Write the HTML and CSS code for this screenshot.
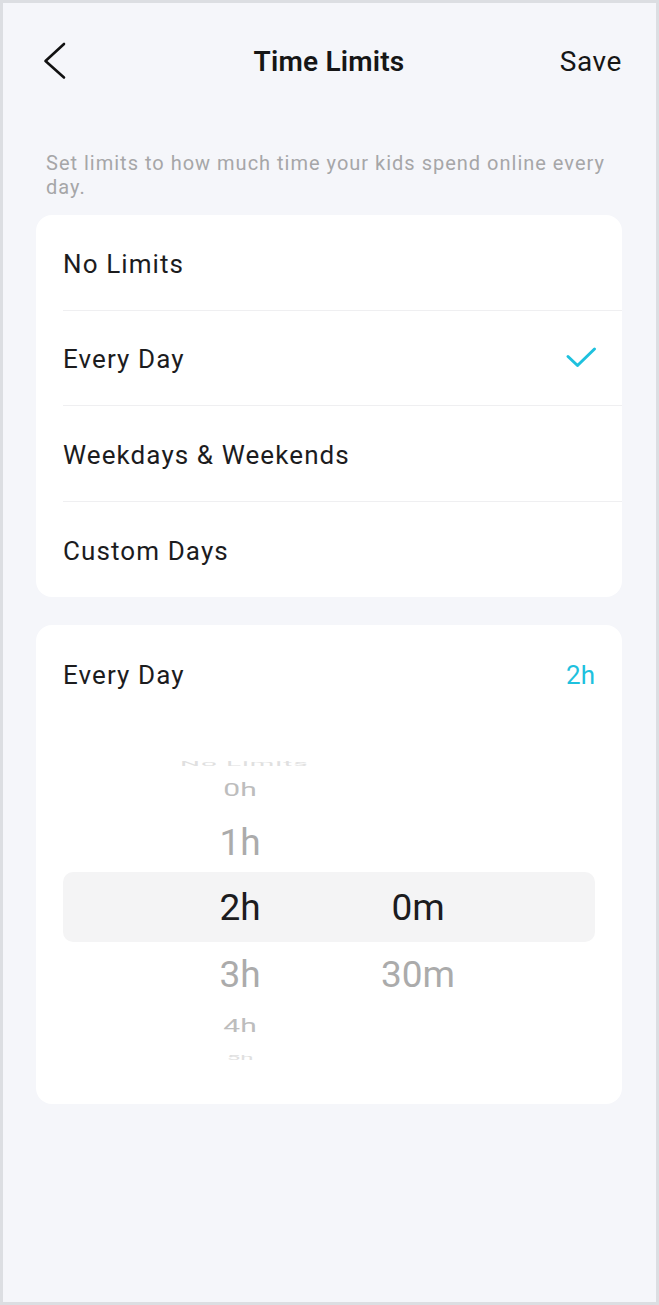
FILE: index.html
```html
<!DOCTYPE html>
<html lang="en">
<head>
<meta charset="utf-8">
<title>Time Limits</title>
<link rel="stylesheet" href="styles.css">
</head>
<body>
<div class="screen">
  <header class="topbar">
    <div class="back">
      <svg width="28" height="40" viewBox="0 0 28 40"><path d="M24 3 L5.5 20 L24 36.5" fill="none" stroke="#111" stroke-width="2.6" stroke-linecap="round" stroke-linejoin="round"/></svg>
    </div>
    <h1 class="title">Time Limits</h1>
    <div class="save">Save</div>
  </header>

  <p class="intro">Set limits to how much time your kids spend online every day.</p>

  <section class="card options">
    <div class="opt"><div class="opt-inner"><span>No Limits</span></div></div>
    <div class="opt"><div class="opt-inner"><span>Every Day</span>
      <svg class="check" width="32" height="24" viewBox="0 0 32 24"><path d="M3 10.5 L12.5 19.5 L29.5 3" fill="none" stroke="#1ec1de" stroke-width="3" stroke-linecap="round" stroke-linejoin="round"/></svg>
    </div></div>
    <div class="opt"><div class="opt-inner"><span>Weekdays &amp; Weekends</span></div></div>
    <div class="opt last"><div class="opt-inner"><span>Custom Days</span></div></div>
  </section>

  <section class="card schedule">
    <div class="sched-head"><span>Every Day</span><span class="sched-val">2h</span></div>
    <div class="picker">
      <div class="prow r0"><span class="cell">No Limits</span><span class="cell"></span></div>
      <div class="prow r1"><span class="cell">0h</span><span class="cell"></span></div>
      <div class="prow r2"><span class="cell">1h</span><span class="cell"></span></div>
      <div class="prow r3 sel"><span class="cell">2h</span><span class="cell">0m</span></div>
      <div class="prow r4"><span class="cell">3h</span><span class="cell">30m</span></div>
      <div class="prow r5"><span class="cell">4h</span><span class="cell"></span></div>
      <div class="prow r6"><span class="cell">5h</span><span class="cell"></span></div>
    </div>
  </section>
</div>
</body>
</html>
```

FILE: styles.css
```css
* { box-sizing: border-box; }
html, body { margin: 0; padding: 0; }
body {
  font-family: Roboto, "Liberation Sans", Arial, sans-serif;
  background: #f5f6fa;
  color: #1c1c1e;
}
.screen {
  width: 659px;
  height: 1305px;
  border: 3px solid #dcdee2;
  background: #f5f6fa;
  padding: 28px 34px 0 33px;
  overflow: hidden;
}
.topbar {
  display: grid;
  grid-template-columns: 1fr auto 1fr;
  align-items: center;
  height: 60px;
}
.back {
  display: flex;
  align-items: center;
  padding-left: 4px;
}
.back svg { display: block; }
.title {
  margin: 0;
  font-size: 28px;
  font-weight: 600;
  color: #161616;
  letter-spacing: 0.2px;
}
.save {
  justify-self: end;
  font-size: 28px;
  color: #161616;
  letter-spacing: 0.6px;
}
.intro {
  margin: 60px 0 16px 10px;
  font-size: 20px;
  line-height: 24px;
  letter-spacing: 1px;
  color: #a6a6a8;
}
.card {
  background: #fff;
  border-radius: 16px;
}
.opt {
  padding-left: 27px;
}
.opt-inner {
  height: 95.5px;
  display: flex;
  align-items: center;
  justify-content: space-between;
  padding-right: 25px;
  padding-top: 3px;
  border-bottom: 1px solid #efeff1;
  font-size: 26px;
  letter-spacing: 1.1px;
  color: #1c1c1e;
}
.opt.last .opt-inner { border-bottom: none; }
.check { display: block; margin-top: -3px; }
.schedule {
  margin-top: 28px;
  padding: 0 27px 44px;
}
.sched-head {
  height: 100px;
  display: flex;
  align-items: center;
  justify-content: space-between;
  font-size: 26px;
  letter-spacing: 1.1px;
  color: #1c1c1e;
}
.sched-val { color: #1ec1de; letter-spacing: 0; }
.picker {
  padding-top: 31px;
}
.prow {
  display: grid;
  grid-template-columns: 120px 120px;
  column-gap: 58px;
  justify-content: center;
  align-items: center;
  font-size: 37px;
  color: #ababab;
}
.cell {
  text-align: center;
  line-height: 1;
  display: block;
  white-space: nowrap;
}
.r0 { height: 12px; }
.r0 .cell { font-size: 28px; transform: translateY(-6px) scaleY(0.25); color: #e0e0e0; letter-spacing: 1px; }
.r1 { height: 44px; }
.r1 .cell { font-size: 30px; transform: scaleY(0.6); color: #bdbdbd; }
.r2 { height: 60px; }
.r3 { height: 70px; background: #f4f4f5; border-radius: 10px; }
.r3 .cell { color: #1c1c1e; }
.r4 { height: 64px; }
.r5 { height: 40px; }
.r5 .cell { font-size: 30px; transform: scaleY(0.6); color: #bdbdbd; }
.r6 { height: 14px; }
.r6 .cell { font-size: 24px; transform: scaleY(0.3); color: #e0e0e0; }
```
